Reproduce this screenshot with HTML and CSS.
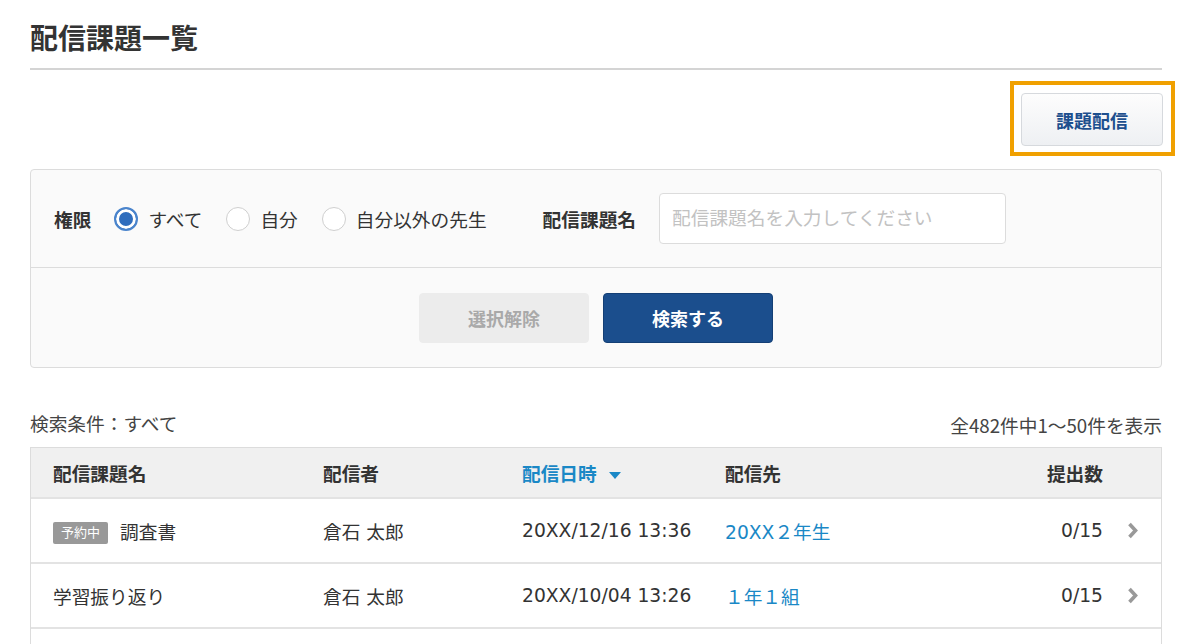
FILE: index.html
```html
<!DOCTYPE html>
<html lang="ja">
<head>
    <meta charset="UTF-8">
    <meta name="viewport" content="width=device-width, initial-scale=1.0">
    <title>配信課題一覧</title>
    <link rel="stylesheet" href="styles.css">
</head>
<body>
    <div class="page">
        <!-- タイトル -->
        <div class="page-header">
            <h1>配信課題一覧</h1>
        </div>

        <div class="action-bar">
            <span class="highlight">
                <button class="deliver-btn">課題配信</button>
            </span>
        </div>

        <!-- 検索パネル -->
        <div class="search-panel">
            <div class="search-fields">
                <span class="field-label">権限</span>
                <label class="radio checked"><span class="radio-mark"></span>すべて</label>
                <label class="radio"><span class="radio-mark"></span>自分</label>
                <label class="radio"><span class="radio-mark"></span>自分以外の先生</label>
                <span class="field-label name-label">配信課題名</span>
                <input type="text" class="name-input" placeholder="配信課題名を入力してください">
            </div>
            <div class="search-actions">
                <button class="clear-btn">選択解除</button>
                <button class="search-btn">検索する</button>
            </div>
        </div>

        <!-- 一覧 -->
        <div class="result-info">
            <span>検索条件：すべて</span>
            <span class="count">全482件中1～50件を表示</span>
        </div>

        <div class="task-table">
            <div class="table-row table-head">
                <div>配信課題名</div>
                <div>配信者</div>
                <div class="sorted">配信日時 <span class="sort-arrow"></span></div>
                <div>配信先</div>
                <div class="num">提出数</div>
                <div></div>
            </div>
            <div class="table-row">
                <div><span class="badge">予約中</span>調査書</div>
                <div>倉石 太郎</div>
                <div>20XX/12/16 13:36</div>
                <div class="link">20XX２年生</div>
                <div class="num">0/15</div>
                <div class="chev"><svg width="12" height="17" viewBox="0 0 12 17"><polyline points="2.5,2 8.5,8.5 2.5,15" fill="none" stroke="#999" stroke-width="3.6"/></svg></div>
            </div>
            <div class="table-row">
                <div>学習振り返り</div>
                <div>倉石 太郎</div>
                <div>20XX/10/04 13:26</div>
                <div class="link">１年１組</div>
                <div class="num">0/15</div>
                <div class="chev"><svg width="12" height="17" viewBox="0 0 12 17"><polyline points="2.5,2 8.5,8.5 2.5,15" fill="none" stroke="#999" stroke-width="3.6"/></svg></div>
            </div>
            <div class="table-row empty-row"></div>
        </div>
    </div>
</body>
</html>
```

FILE: styles.css
```css
* {
    margin: 0;
    padding: 0;
    box-sizing: border-box;
    font-family: "DejaVu Sans", "Noto Sans CJK JP", sans-serif;
}

body {
    background-color: white;
    color: #333;
    font-size: 18.7px;
}

.page {
    width: 1132px;
    margin-left: 30px;
}

/* タイトル */
.page-header {
    padding-top: 21px;
    padding-bottom: 10px;
    border-bottom: 2px solid #d4d4d4;
}

.page-header h1 {
    font-size: 28px;
    font-weight: bold;
    line-height: 37px;
    color: #333;
}

.action-bar {
    display: flex;
    justify-content: flex-end;
    padding-top: 11px;
    padding-bottom: 13px;
}

.highlight {
    display: flex;
    border: 4px solid #f0a000;
    padding: 8px 8px 6px 7px;
    margin-right: -13px;
}

.deliver-btn {
    width: 142px;
    height: 53px;
    background: linear-gradient(#fdfdfd, #eef0f3);
    border: 1px solid #d6d9dd;
    border-radius: 4px;
    color: #1d4f8e;
    font-size: 18px;
    font-weight: bold;
    cursor: pointer;
}

/* 検索パネル */
.search-panel {
    background-color: #fafafa;
    border: 1px solid #dcdcdc;
    border-radius: 4px;
}

.search-fields {
    display: flex;
    align-items: center;
    height: 98px;
    padding-left: 23px;
    border-bottom: 1px solid #dcdcdc;
}

.field-label {
    font-weight: bold;
    margin-right: 23px;
}

.name-label {
    margin-left: 32px;
}

.radio {
    display: flex;
    align-items: center;
    margin-right: 24px;
    cursor: pointer;
}

.radio-mark {
    width: 24px;
    height: 24px;
    border-radius: 50%;
    border: 1px solid #cfcfcf;
    background-color: white;
    margin-right: 10px;
}

.radio.checked .radio-mark {
    border: 2px solid #4a84cc;
    background-color: #2f6dbd;
    box-shadow: inset 0 0 0 3px white;
}

.name-input {
    width: 347px;
    height: 51px;
    border: 1px solid #dcdcdc;
    border-radius: 4px;
    padding: 0 12px;
    font-size: 18.7px;
    color: #333;
    background-color: white;
}

.name-input::placeholder {
    color: #c2c2c2;
}

.search-actions {
    display: flex;
    justify-content: center;
    align-items: center;
    gap: 14px;
    height: 99px;
}

.clear-btn,
.search-btn {
    width: 170px;
    height: 50px;
    border-radius: 4px;
    font-size: 18px;
    font-weight: bold;
    cursor: pointer;
}

.clear-btn {
    background-color: #ececec;
    border: 1px solid #ececec;
    color: #a9a9a9;
}

.search-btn {
    background-color: #1b4e8d;
    border: 1px solid #143f75;
    color: white;
}

/* 一覧 */
.result-info {
    display: flex;
    justify-content: space-between;
    margin-top: 43px;
    line-height: 27px;
    color: #444;
    margin-bottom: 9px;
}

.result-info .count {
    font-family: "Noto Sans CJK JP", sans-serif;
}

.task-table {
    border: 1px solid #dcdcdc;
    border-bottom: none;
}

.table-row {
    display: grid;
    grid-template-columns: 270px 199px 203px 1fr 90px 58px;
    align-items: center;
    height: 65px;
    padding-left: 22px;
    border-bottom: 2px solid #e3e3e3;
}

.table-head {
    height: 51px;
    background-color: #f0f0f0;
    font-weight: bold;
}

.table-head .sorted {
    color: #1a88c6;
}

.sort-arrow {
    display: inline-block;
    margin-left: 6px;
    width: 0;
    height: 0;
    border-left: 6px solid transparent;
    border-right: 6px solid transparent;
    border-top: 7px solid #1a88c6;
    vertical-align: middle;
}

.num {
    text-align: right;
}

.link {
    color: #1a88c6;
}

.chev {
    display: flex;
    justify-content: center;
    padding-left: 2px;
}

.badge {
    display: inline-block;
    background-color: #999;
    color: white;
    font-size: 13px;
    line-height: 22px;
    padding: 0 8px;
    border-radius: 2px;
    margin-right: 12px;
    vertical-align: 2px;
}

.empty-row {
    border-bottom: none;
}
```
